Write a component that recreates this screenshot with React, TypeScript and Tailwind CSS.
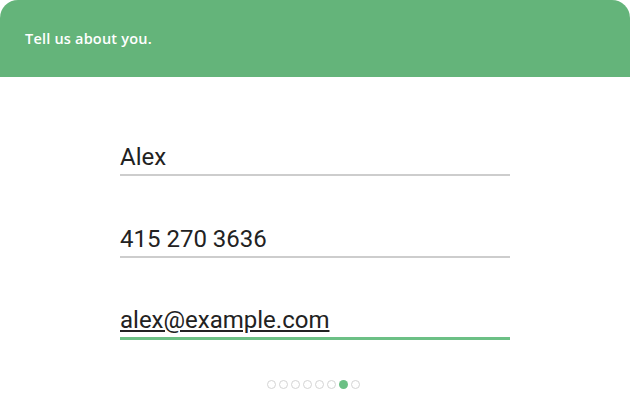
import React from 'react';

const fields = [
  { value: 'Alex', active: false },
  { value: '415 270 3636', active: false },
  { value: 'alex@example.com', active: true },
];

const App: React.FC = () => {
  return (
    <div className="w-[630px] h-[403px] bg-white flex flex-col overflow-hidden">
      {/* Header */}
      <div className="h-[77px] shrink-0 bg-[#64b47a] rounded-t-[18px] flex items-center px-[25px]">
        <h1 className="text-white text-[14.5px] font-semibold font-['Open_Sans',sans-serif] tracking-[0.2px]">
          Tell us about you.
        </h1>
      </div>

      {/* Form */}
      <div className="flex flex-col items-center pt-[64px] gap-[47px] font-['Roboto',sans-serif]">
        {fields.map((f) => (
          <div
            key={f.value}
            className={
              f.active
                ? 'w-[390px] h-[35px] border-b-[3px] border-[#6cc085] flex items-end'
                : 'w-[390px] h-[35px] border-b-2 border-[#cdcdcd] flex items-end'
            }
          >
            <span
              className={
                f.active
                  ? 'text-[24px] leading-[28px] text-[#222] underline underline-offset-[2px] decoration-[1.5px] pb-[3px]'
                  : 'text-[24px] leading-[28px] text-[#222] pb-[3px]'
              }
            >
              {f.value}
            </span>
          </div>
        ))}
      </div>

      {/* Pager dots */}
      <div className="flex justify-center gap-[3px] mt-[40px] pr-[3px]">
        {[0, 1, 2, 3, 4, 5, 6, 7].map((i) => (
          <span
            key={i}
            className={
              i === 6
                ? 'w-[9px] h-[9px] rounded-full bg-[#6cc085]'
                : 'w-[9px] h-[9px] rounded-full border border-[#d4d4d4] bg-white'
            }
          />
        ))}
      </div>
    </div>
  );
};

export default App;
